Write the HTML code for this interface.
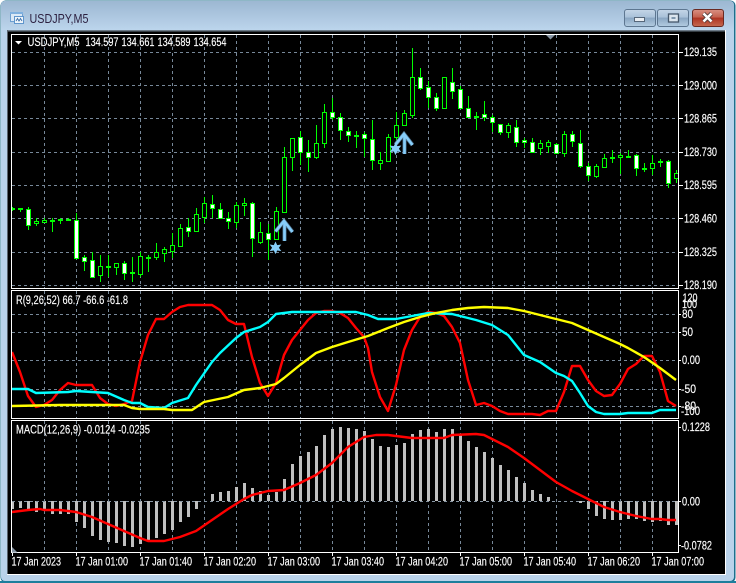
<!DOCTYPE html>
<html><head><meta charset="utf-8"><title>USDJPY,M5</title>
<style>
html,body{margin:0;padding:0;width:736px;height:583px;overflow:hidden;background:#fff}
svg{display:block;position:absolute;left:0;top:0}
text{font-family:"Liberation Sans",sans-serif;font-size:11.5px;fill:#fff;stroke:#fff;stroke-width:.15px}
</style></head><body>
<svg width="736" height="583" viewBox="0 0 736 583" xmlns="http://www.w3.org/2000/svg">
<defs>
<linearGradient id="tb" x1="0" y1="0" x2="0" y2="1"><stop offset="0" stop-color="#9cb7d2"/><stop offset="1" stop-color="#bcd5ec"/></linearGradient>
<linearGradient id="bb" x1="0" y1="0" x2="0" y2="1"><stop offset="0" stop-color="#c5d6e8"/><stop offset=".45" stop-color="#a9c1d9"/><stop offset=".5" stop-color="#8aa6c2"/><stop offset="1" stop-color="#b3cce2"/></linearGradient>
<linearGradient id="cb" x1="0" y1="0" x2="0" y2="1"><stop offset="0" stop-color="#d99083"/><stop offset=".45" stop-color="#c4614f"/><stop offset=".5" stop-color="#ae3322"/><stop offset="1" stop-color="#c66a50"/></linearGradient>
</defs>
<!-- window frame -->
<rect x="0.5" y="0.5" width="735" height="582" rx="5" fill="#1d6f8c"/>
<rect x="1" y="1" width="733" height="580" rx="4" fill="#b9d2ea"/>
<path d="M1 30V6Q1 1 6 1H730Q734 1 734 6V30z" fill="url(#tb)"/>
<rect x="7" y="30" width="719" height="545" fill="#fff"/>
<rect x="7" y="30" width="718" height="544" fill="#000"/>
<rect x="7" y="30" width="718" height="1.5" fill="#6d7b88"/>
<rect x="7" y="30" width="1" height="544" fill="#59636d"/>
<rect x="0" y="581" width="736" height="2" fill="#1d7e9c"/>
<!-- title -->
<g shape-rendering="crispEdges">
<rect x="10.5" y="12.5" width="12" height="9" fill="#dbe9f6" stroke="#6e9fd0"/>
<rect x="14.5" y="16.5" width="9" height="7" fill="#eef5fb" stroke="#5f95cc"/>
<rect x="10" y="12" width="13" height="2" fill="#7fb0de"/>
</g>
<path d="M16 21l1.5-2.5 1.5 2.5 1.5-2.5 1.5 2.5" fill="none" stroke="#3b6ea8" stroke-width=".9"/>
<text x="29.5" y="23" style="font-size:13px;fill:#2b1f3f;stroke:none" textLength="59" lengthAdjust="spacingAndGlyphs">USDJPY,M5</text>
<!-- buttons -->
<rect x="624.5" y="9.5" width="31" height="17" rx="2.5" fill="url(#bb)" stroke="#5d7690"/>
<rect x="634.5" y="17.5" width="10" height="4" fill="#e8edf2" stroke="#56677a"/>
<rect x="657.5" y="9.5" width="31" height="17" rx="2.5" fill="url(#bb)" stroke="#5d7690"/>
<rect x="668.5" y="14" width="10" height="8" fill="#dbe5ee" stroke="#46586c" stroke-width="1.3"/>
<rect x="671.5" y="17" width="4" height="2" fill="#7f97ae"/>
<rect x="692.5" y="9.5" width="31" height="17" rx="2.5" fill="url(#cb)" stroke="#6a2a22"/>
<path d="M703.5 13.5l8 8M711.5 13.5l-8 8" stroke="#4d3a3a" stroke-width="4.2"/>
<path d="M703.5 13.5l8 8M711.5 13.5l-8 8" stroke="#fff" stroke-width="2.6"/>
<!-- grid -->
<g fill="none" stroke="#778899" stroke-dasharray="3 3" shape-rendering="crispEdges">
<path d="M12 52.5H678M12 85.5H678M12 118.5H678M12 152.5H678M12 185.5H678M12 218.5H678M12 252.5H678M12 285.5H678"/>
<path d="M12 314.5H678M12 332.5H678M12 360.5H678M12 389.5H678M12 406.5H678"/>
<path d="M44.5 35V288M76.5 35V288M108.5 35V288M140.5 35V288M172.5 35V288M204.5 35V288M236.5 35V288M268.5 35V288M300.5 35V288M332.5 35V288M364.5 35V288M396.5 35V288M428.5 35V288M460.5 35V288M492.5 35V288M524.5 35V288M556.5 35V288M588.5 35V288M620.5 35V288M652.5 35V288"/>
<path d="M44.5 291V418M76.5 291V418M108.5 291V418M140.5 291V418M172.5 291V418M204.5 291V418M236.5 291V418M268.5 291V418M300.5 291V418M332.5 291V418M364.5 291V418M396.5 291V418M428.5 291V418M460.5 291V418M492.5 291V418M524.5 291V418M556.5 291V418M588.5 291V418M620.5 291V418M652.5 291V418"/>
<path d="M44.5 421V552M76.5 421V552M108.5 421V552M140.5 421V552M172.5 421V552M204.5 421V552M236.5 421V552M268.5 421V552M300.5 421V552M332.5 421V552M364.5 421V552M396.5 421V552M428.5 421V552M460.5 421V552M492.5 421V552M524.5 421V552M556.5 421V552M588.5 421V552M620.5 421V552M652.5 421V552"/>
</g>
<!-- candle wicks -->
<path shape-rendering="crispEdges" fill="none" stroke="#0f0" d="M12.5 207V211M20.5 208V212M28.5 207V230M36.5 218V226M44.5 218V223M52.5 218V232M60.5 218V224M68.5 218V221M76.5 213V258M84.5 255V271M92.5 252V278M100.5 255V282M108.5 255V277M116.5 263V275M124.5 261V280M132.5 257V282M140.5 252V277M148.5 255V272M156.5 243V260M164.5 247V262M172.5 233V258M180.5 224V247M188.5 218V237M196.5 208V231M204.5 197V223M212.5 195V218M220.5 203V218M228.5 212V229M236.5 202V228M244.5 198V216M252.5 202V257M260.5 222V244M268.5 224V260M276.5 207V240M284.5 147V212M292.5 138V171M300.5 131V165M308.5 140V172M316.5 125V159M324.5 104V148M332.5 98V120M340.5 113V140M348.5 127V142M356.5 131V148M364.5 132V157M372.5 120V170M380.5 152V170M388.5 134V162M396.5 112V147M404.5 110V126M412.5 48V118M420.5 68V90M428.5 81V108M436.5 93V111M452.5 68V99M460.5 86V108M468.5 96V118M476.5 112V130M484.5 101V121M492.5 115V132M500.5 124V135M508.5 123V138M516.5 120V147M524.5 138V148M532.5 138V153M540.5 140V155M548.5 140V153M556.5 143V153M564.5 131V157M572.5 131V147M580.5 130V168M588.5 163V181M596.5 164V178M604.5 154V168M612.5 150V163M620.5 153V174M628.5 150V158M636.5 154V176M644.5 163V172M652.5 155V175M660.5 159V167M668.5 160V188M676.5 170V183"/>
<!-- hollow bodies -->
<path shape-rendering="crispEdges" fill="#000" stroke="#0f0" d="M34.5 221.5h4v2h-4zM42.5 220.5h4v2h-4zM98.5 266.5h4v9h-4zM114.5 263.5h4v4h-4zM138.5 256.5h4v18h-4zM154.5 252.5h4v5h-4zM162.5 249.5h4v4h-4zM170.5 245.5h4v6h-4zM178.5 228.5h4v18h-4zM194.5 214.5h4v17h-4zM202.5 203.5h4v14h-4zM234.5 205.5h4v17h-4zM242.5 203.5h4v2h-4zM258.5 232.5h4v10h-4zM274.5 211.5h4v28h-4zM282.5 157.5h4v55h-4zM290.5 138.5h4v19h-4zM314.5 143.5h4v14h-4zM322.5 112.5h4v31h-4zM378.5 160.5h4v3h-4zM386.5 137.5h4v24h-4zM394.5 125.5h4v12h-4zM402.5 113.5h4v12h-4zM410.5 77.5h4v38h-4zM442.5 77.5h4v31h-4zM506.5 125.5h4v7h-4zM538.5 143.5h4v5h-4zM546.5 142.5h4v4h-4zM562.5 134.5h4v19h-4zM594.5 166.5h4v10h-4zM602.5 158.5h4v9h-4zM618.5 155.5h4v2h-4zM650.5 163.5h4v5h-4zM674.5 173.5h4v5h-4z"/>
<!-- doji -->
<path shape-rendering="crispEdges" fill="none" stroke="#0f0" stroke-width="2" d="M10 209h5M18 209h5M50 221h5M58 220h5M66 220h5M106 267h5M130 273h5M146 258h5M354 136h5M474 117h5M610 158h5M626 157h5M642 169h5M658 162h5"/>
<!-- white bodies -->
<path shape-rendering="crispEdges" fill="#fff" stroke="#0f0" d="M26.5 209.5h4v16h-4zM74.5 220.5h4v38h-4zM82.5 257.5h4v4h-4zM90.5 260.5h4v17h-4zM122.5 263.5h4v10h-4zM186.5 227.5h4v4h-4zM210.5 204.5h4v4h-4zM218.5 209.5h4v9h-4zM226.5 218.5h4v3h-4zM250.5 203.5h4v35h-4zM266.5 233.5h4v6h-4zM298.5 137.5h4v15h-4zM306.5 152.5h4v5h-4zM330.5 112.5h4v5h-4zM338.5 117.5h4v13h-4zM346.5 131.5h4v4h-4zM362.5 134.5h4v4h-4zM370.5 139.5h4v21h-4zM418.5 77.5h4v11h-4zM426.5 87.5h4v10h-4zM434.5 97.5h4v11h-4zM450.5 82.5h4v9h-4zM458.5 89.5h4v19h-4zM466.5 108.5h4v9h-4zM482.5 114.5h4v3h-4zM490.5 117.5h4v5h-4zM498.5 124.5h4v8h-4zM514.5 127.5h4v15h-4zM522.5 140.5h4v2h-4zM530.5 142.5h4v10h-4zM554.5 144.5h4v9h-4zM570.5 134.5h4v7h-4zM578.5 143.5h4v23h-4zM586.5 166.5h4v9h-4zM634.5 155.5h4v13h-4zM666.5 161.5h4v22h-4z"/>
<!-- arrows and stars -->
<g fill="none" stroke-linejoin="miter">
<path d="M275.5 231.5L284 221L292.5 232M284.5 222V241" stroke="#4d6f8a" stroke-width="4"/>
<path d="M275.5 231.5L284 221L292.5 232M284.5 222V241" stroke="#87cefa" stroke-width="2.6"/>
<path d="M395.5 144.5L404 134L412.5 145M404.5 135V154" stroke="#4d6f8a" stroke-width="4"/>
<path d="M395.5 144.5L404 134L412.5 145M404.5 135V154" stroke="#87cefa" stroke-width="2.6"/>
</g>
<path fill="#87cefa" d="M275.5 241.5l1.7 3.6 4.1-.6-2.4 3.3 2.4 3.3-4.1-.6-1.7 3.6-1.7-3.6-4.1.6 2.4-3.3-2.4-3.3 4.1.6z"/>
<path fill="#87cefa" d="M395.5 142.5l1.7 3.6 4.1-.6-2.4 3.3 2.4 3.3-4.1-.6-1.7 3.6-1.7-3.6-4.1.6 2.4-3.3-2.4-3.3 4.1.6z"/>
<!-- RSI lines -->
<g fill="none" stroke-width="2.4" stroke-linejoin="round">
<polyline stroke="#f00" points="12,352 20,372 28,396 36,407 44,405 52,400 60,390 68,383 76,385 92,385 100,398 108,404 116,406 124,404 132,401 140,362 148,335 156,319 164,319 172,312 180,307 188,305 212,305 220,310 228,320 236,324 244,324 252,357 260,383 268,396 276,383 284,355 292,340 300,330 308,320 316,313 324,311 332,311 340,313 348,318 356,328 364,337 368,348 372,372 380,397 388,411 396,385 404,350 412,330 420,317 428,312 436,313 444,316 452,327 460,343 468,380 476,405 484,403 492,406 500,411 508,414 532,414 540,415 548,411 556,411 564,392 572,366 580,366 588,380 596,391 604,396 612,395 620,384 628,369 636,364 644,356 652,356 660,372 668,401 676,406"/>
<polyline stroke="#0ff" points="12,389 28,389 36,393 68,392 76,391 108,393 124,400 132,403 140,403 148,407 164,408 172,403 188,398 196,385 212,362 220,353 236,338 244,332 260,327 268,322 276,314 292,312 356,312 368,315 378,319 396,319 412,316 428,313 452,314 460,316 476,320 492,325 508,335 524,355 540,362 556,373 564,376 572,381 580,393 588,406 596,412 604,414 620,414 628,413 652,413 660,410 676,410"/>
<polyline stroke="#ff0" points="12,406 60,405 124,405 132,408 140,409 164,409 172,410 192,410 204,402 228,397 244,390 260,388 276,384 284,378 300,365 316,353 332,347 348,342 368,336 388,328 404,322 420,317 436,313 452,310 468,308 484,307 508,308 524,311 540,315 556,319 572,323 588,330 604,337 620,344 628,348 644,357 660,368 676,380"/>
</g>
<!-- MACD bars -->
<path shape-rendering="crispEdges" fill="none" stroke="#c0c0c0" stroke-width="3" d="M12.5 501V509M20.5 501V508M28.5 501V509M36.5 501V512M44.5 501V511M52.5 501V514M60.5 501V514M68.5 501V514M76.5 501V522M84.5 501V528M92.5 501V536M100.5 501V540M108.5 501V542M116.5 501V543M124.5 501V546M132.5 501V547M140.5 501V544M148.5 501V541M156.5 501V538M164.5 501V534M172.5 501V530M180.5 501V522M188.5 501V517M196.5 501V509M212.5 501V494M220.5 501V492M228.5 501V491M236.5 501V487M244.5 501V483M252.5 501V488M260.5 501V491M268.5 501V495M276.5 501V492M284.5 501V479M292.5 501V464M300.5 501V456M308.5 501V452M316.5 501V446M324.5 501V435M332.5 501V429M340.5 501V427M348.5 501V428M356.5 501V429M364.5 501V431M372.5 501V439M380.5 501V446M388.5 501V447M396.5 501V445M404.5 501V443M412.5 501V434M420.5 501V430M428.5 501V429M436.5 501V432M444.5 501V429M452.5 501V429M460.5 501V434M468.5 501V441M476.5 501V447M484.5 501V452M492.5 501V458M500.5 501V465M508.5 501V470M516.5 501V477M524.5 501V483M532.5 501V490M540.5 501V494M548.5 501V497M580.5 501V503M588.5 501V509M596.5 501V516M604.5 501V519M612.5 501V520M620.5 501V520M628.5 501V519M636.5 501V519M644.5 501V521M652.5 501V522M660.5 501V521M668.5 501V525M676.5 501V525"/>
<path shape-rendering="crispEdges" fill="none" stroke="#8795a3" stroke-dasharray="3 3" d="M12 501.5H678"/>
<polyline fill="none" stroke="#f00" stroke-width="2.4" stroke-linejoin="round" points="12,512 28,510 40,509 44,510 60,510 76,512 92,517 108,524 124,531 140,538 148,541 164,541 180,537 196,531 212,520 228,509 244,499 252,495 268,491 284,490 300,483 316,475 332,463 348,447 364,437 376,435 388,435 396,436 412,438 444,438 452,435 476,434 484,435 492,439 508,447 524,458 540,470 556,482 572,491 588,499 604,507 620,512 636,516 652,519 660,519 668,520 676,520"/>
<!-- clear outside plot -->
<rect x="679" y="32" width="45" height="530" fill="#000"/>
<rect x="8" y="32" width="3" height="530" fill="#000"/>
<rect x="8" y="288.5" width="671" height="2" fill="#000"/>
<rect x="8" y="418.5" width="671" height="2" fill="#000"/>
<!-- panel borders and ticks -->
<g shape-rendering="crispEdges" fill="none" stroke="#fff">
<path d="M11.5 34.5H678.5V288.5H11.5z"/>
<path d="M11.5 290.5H678.5V418.5H11.5z"/>
<path d="M11.5 420.5H678.5V552.5H11.5z"/>
<path d="M679 52.5h4M679 85.5h4M679 118.5h4M679 152.5h4M679 185.5h4M679 218.5h4M679 252.5h4M679 285.5h4M679 332.5h2M679 360.5h2M679 389.5h2M679 406.5h2M679 501.5h2M679 545.5h2M679 427.5h2M679 314.5h2"/>
<path d="M12.5 553v3M76.5 553v3M140.5 553v3M204.5 553v3M268.5 553v3M332.5 553v3M396.5 553v3M460.5 553v3M524.5 553v3M588.5 553v3M652.5 553v3"/>
</g>
<path d="M546 35h9l-4.5 4.5z" fill="#8795a3"/>
<path d="M12 547l5.5 5.5H12z" fill="#8795a3"/>
<path d="M15 41h7l-3.500 3.500z" fill="#fff"/>
<!-- text -->
<text x="27.5" y="46" textLength="52" lengthAdjust="spacingAndGlyphs">USDJPY,M5</text>
<text x="85.5" y="46" textLength="33" lengthAdjust="spacingAndGlyphs">134.597</text>
<text x="121.5" y="46" textLength="33" lengthAdjust="spacingAndGlyphs">134.661</text>
<text x="157.5" y="46" textLength="33" lengthAdjust="spacingAndGlyphs">134.589</text>
<text x="193.5" y="46" textLength="33" lengthAdjust="spacingAndGlyphs">134.654</text>
<text x="16" y="304" textLength="112" lengthAdjust="spacingAndGlyphs">R(9,26,52) 66.7 -66.6 -61.8</text>
<text x="16" y="433.5" textLength="134" lengthAdjust="spacingAndGlyphs">MACD(12,26,9) -0.0124 -0.0235</text>
<text x="684" y="56" textLength="33" lengthAdjust="spacingAndGlyphs">129.135</text>
<text x="684" y="89.5" textLength="33" lengthAdjust="spacingAndGlyphs">129.000</text>
<text x="684" y="122.5" textLength="33" lengthAdjust="spacingAndGlyphs">128.865</text>
<text x="684" y="156" textLength="33" lengthAdjust="spacingAndGlyphs">128.730</text>
<text x="684" y="189" textLength="33" lengthAdjust="spacingAndGlyphs">128.595</text>
<text x="684" y="222.5" textLength="33" lengthAdjust="spacingAndGlyphs">128.460</text>
<text x="684" y="256" textLength="33" lengthAdjust="spacingAndGlyphs">128.325</text>
<text x="684" y="289" textLength="33" lengthAdjust="spacingAndGlyphs">128.190</text>
<text x="682.5" y="302" textLength="15" lengthAdjust="spacingAndGlyphs">120</text>
<text x="682" y="308" textLength="15" lengthAdjust="spacingAndGlyphs">100</text>
<text x="682" y="318" textLength="11" lengthAdjust="spacingAndGlyphs">80</text>
<text x="682" y="336" textLength="11" lengthAdjust="spacingAndGlyphs">50</text>
<text x="682" y="364" textLength="18" lengthAdjust="spacingAndGlyphs">0.00</text>
<text x="681" y="393" textLength="15" lengthAdjust="spacingAndGlyphs">-50</text>
<text x="681" y="410" textLength="15" lengthAdjust="spacingAndGlyphs">-80</text>
<text x="681" y="415" textLength="19" lengthAdjust="spacingAndGlyphs">-100</text>
<text x="682" y="431" textLength="28" lengthAdjust="spacingAndGlyphs">0.1228</text>
<text x="682" y="505.5" textLength="18" lengthAdjust="spacingAndGlyphs">0.00</text>
<text x="681" y="549.5" textLength="31" lengthAdjust="spacingAndGlyphs">-0.0782</text>
<text x="11.5" y="565.5" textLength="49.5" lengthAdjust="spacingAndGlyphs">17 Jan 2023</text>
<text x="75.5" y="565.5" textLength="52.5" lengthAdjust="spacingAndGlyphs">17 Jan 01:00</text>
<text x="139.5" y="565.5" textLength="52.5" lengthAdjust="spacingAndGlyphs">17 Jan 01:40</text>
<text x="203.5" y="565.5" textLength="52.5" lengthAdjust="spacingAndGlyphs">17 Jan 02:20</text>
<text x="267.5" y="565.5" textLength="52.5" lengthAdjust="spacingAndGlyphs">17 Jan 03:00</text>
<text x="331.5" y="565.5" textLength="52.5" lengthAdjust="spacingAndGlyphs">17 Jan 03:40</text>
<text x="395.5" y="565.5" textLength="52.5" lengthAdjust="spacingAndGlyphs">17 Jan 04:20</text>
<text x="459.5" y="565.5" textLength="52.5" lengthAdjust="spacingAndGlyphs">17 Jan 05:00</text>
<text x="523.5" y="565.5" textLength="52.5" lengthAdjust="spacingAndGlyphs">17 Jan 05:40</text>
<text x="587.5" y="565.5" textLength="52.5" lengthAdjust="spacingAndGlyphs">17 Jan 06:20</text>
<text x="651.5" y="565.5" textLength="52.5" lengthAdjust="spacingAndGlyphs">17 Jan 07:00</text>
</svg>
</body></html>
